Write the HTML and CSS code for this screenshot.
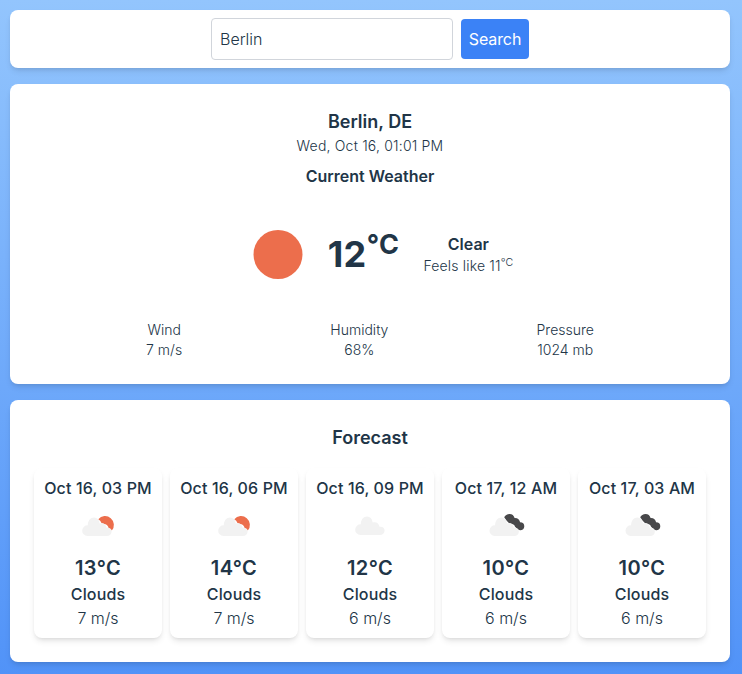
FILE: index.html
```html
<!DOCTYPE html>
<html lang="en">
<head>
<meta charset="utf-8">
<title>Weather</title>
<link rel="stylesheet" href="styles.css">
</head>
<body>
<svg class="defs" aria-hidden="true">
  <symbol id="cloud" viewBox="0 0 50 50">
    <path fill="#f2f2f2" d="M14.4 36A5.4 5.4 0 0 1 14.8 25.2C14.9 20.6 17.5 17.5 21.1 17.5C24.1 17.5 26 19.6 26.7 23.4C30.4 22.5 33 24.3 33.5 27.7C36.7 27.3 38.6 29.1 38.6 31.5C38.6 34 36.7 36 33.9 36Z"/>
  </symbol>
  <symbol id="sun-cloud" viewBox="0 0 50 50">
    <path fill="#ec6e4c" d="M25.3 19.2A8.8 8.8 0 1 1 38.8 30.6L37.8 29L35.7 28.3C35.3 25.8 33.9 24.4 31.6 23.9L28.5 22.9L27.2 20.8Z"/>
    <use href="#cloud"/>
  </symbol>
  <symbol id="broken-clouds" viewBox="0 0 50 50">
    <path fill="#48484a" d="M23.2 17.3C24 15.2 26.2 13.9 28.6 13.9C31.2 13.9 33 15.5 33.6 18C36.6 17.8 38.8 19.9 39.1 22.3C41.8 22.3 43.3 23.9 43.3 26.2C43.3 28.6 41.6 30.2 39.2 30.2C37.8 30.2 36.5 29.2 35.4 28.1C34.4 27.3 33.6 26.2 33.2 25L30.2 23.4L27.9 22.9L25.5 20.4Z"/>
    <use href="#cloud" x="-.7"/>
  </symbol>
</svg>
<main class="page">
  <form class="card search">
    <input class="search-input" type="text" value="Berlin" aria-label="City">
    <button class="search-button" type="button">Search</button>
  </form>

  <section class="card current">
    <h2 class="title">Berlin, DE</h2>
    <p class="small date">Wed, Oct 16, 01:01 PM</p>
    <h3 class="subtitle">Current Weather</h3>
    <div class="now">
      <svg class="now-icon" viewBox="0 0 100 100"><circle cx="50" cy="50.5" r="24.5" fill="#ec6e4c"/></svg>
      <p class="now-temp">12<sup>°C</sup></p>
      <div class="now-text">
        <p class="strong">Clear</p>
        <p class="small feels">Feels like 11<sup>°C</sup></p>
      </div>
    </div>
    <div class="stats small">
      <div><p>Wind</p><p>7 m/s</p></div>
      <div><p>Humidity</p><p>68%</p></div>
      <div><p>Pressure</p><p>1024 mb</p></div>
    </div>
  </section>

  <section class="card forecast">
    <h2 class="title">Forecast</h2>
    <div class="days">
      <article class="day">
        <p class="strong">Oct 16, 03 PM</p>
        <svg class="day-icon"><use href="#sun-cloud"/></svg>
        <p class="day-temp">13°C</p><p class="strong">Clouds</p><p>7 m/s</p>
      </article>
      <article class="day">
        <p class="strong">Oct 16, 06 PM</p>
        <svg class="day-icon"><use href="#sun-cloud"/></svg>
        <p class="day-temp">14°C</p><p class="strong">Clouds</p><p>7 m/s</p>
      </article>
      <article class="day">
        <p class="strong">Oct 16, 09 PM</p>
        <svg class="day-icon" viewBox="-1 1 50 50"><use href="#cloud" width="50" height="50"/></svg>
        <p class="day-temp">12°C</p><p class="strong">Clouds</p><p>6 m/s</p>
      </article>
      <article class="day">
        <p class="strong">Oct 17, 12 AM</p>
        <svg class="day-icon"><use href="#broken-clouds"/></svg>
        <p class="day-temp">10°C</p><p class="strong">Clouds</p><p>6 m/s</p>
      </article>
      <article class="day">
        <p class="strong">Oct 17, 03 AM</p>
        <svg class="day-icon"><use href="#broken-clouds"/></svg>
        <p class="day-temp">10°C</p><p class="strong">Clouds</p><p>6 m/s</p>
      </article>
    </div>
  </section>
</main>
</body>
</html>
```
FILE: styles.css
```css
*, *::before, *::after { box-sizing: border-box; }
html { height: 100%; }
body {
  margin: 0;
  min-height: 100%;
  overflow: hidden;
  background: linear-gradient(to bottom, #93c5fd, #3b82f6 900px);
  font-family: Inter, "Liberation Sans", sans-serif;
  font-size: 16px;
  font-weight: 300;
  line-height: 24px;
  color: #213547;
}
h2, h3, p { margin: 0; }
sup {
  position: relative;
  top: -0.5em;
  font-size: 75%;
  line-height: 0;
  vertical-align: baseline;
}
.defs { display: none; }
.page {
  display: flex;
  flex-direction: column;
  gap: 16px;
  width: 740px;
  padding: 10px;
}
.card {
  border-radius: 8px;
  background: #fff;
  box-shadow: 0 4px 6px -1px rgb(0 0 0 / 0.1), 0 2px 4px -2px rgb(0 0 0 / 0.1);
  text-align: center;
}
.search {
  display: flex;
  justify-content: center;
  align-items: center;
  gap: 8px;
  padding: 8px;
}
.search-input {
  width: 242px;
  height: 42px;
  padding: 8px;
  border: 1px solid #d1d5db;
  border-radius: 4px;
  background: #fff;
  color: inherit;
  font: inherit;
}
.search-button {
  width: 68px;
  height: 40px;
  padding: 8px 0;
  border: 0;
  border-radius: 4px;
  background: #3b82f6;
  color: #fff;
  font: inherit;
  font-weight: 400;
  letter-spacing: -0.1px;
}
.current, .forecast { padding: 24px; }
.title { font-size: 18px; font-weight: 600; line-height: 28px; }
.subtitle { margin-top: 8px; font-size: 16px; font-weight: 600; }
.strong { font-weight: 500; }
.small { font-size: 14px; line-height: 20px; }
.date { letter-spacing: 0.19px; }
.feels { letter-spacing: 0.17px; }
.now {
  display: flex;
  justify-content: center;
  align-items: center;
  margin: 16px 0;
  padding-left: 1px;
}
.now-icon { width: 100px; height: 100px; }
.now-temp {
  margin-right: 24px;
  font-size: 36px;
  font-weight: 700;
  line-height: 40px;
  letter-spacing: 0.4px;
}
.now-text .strong { font-weight: 600; }
.stats { display: flex; justify-content: space-around; padding: 0 38px; }
.days { display: grid; grid-template-columns: repeat(5, 1fr); gap: 8px; margin-top: 16px; }
.day {
  padding: 8px;
  border-radius: 8px;
  background: #fff;
  box-shadow: 0 4px 6px -1px rgb(0 0 0 / 0.1), 0 2px 4px -2px rgb(0 0 0 / 0.1);
  white-space: nowrap;
}
.day .strong { letter-spacing: 0.13px; }
.day-icon { display: block; width: 50px; height: 50px; margin: 0 auto 4px; }
.day-temp { font-size: 20px; font-weight: 600; line-height: 28px; letter-spacing: 0.4px; }
```
